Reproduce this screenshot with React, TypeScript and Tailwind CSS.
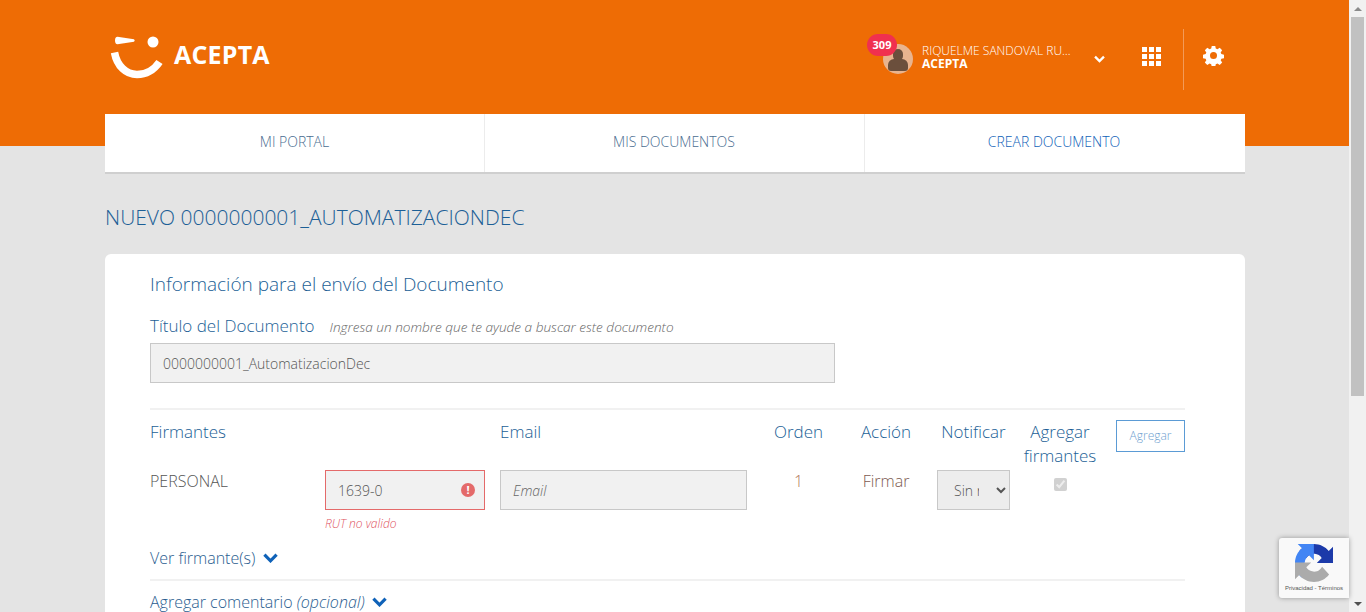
const font = { fontFamily: '"Open Sans", sans-serif' };

function Chevron({ className }: { className: string }) {
  return (
    <svg viewBox="0 0 16 10" className={className} fill="none" stroke="currentColor" strokeWidth="3.4">
      <path d="M1.5 1.5 8 8l6.5-6.5" />
    </svg>
  );
}

function Logo() {
  return (
    <svg viewBox="0 0 56 44" className="w-[56px] h-[44px] mt-[7px]">
      <path d="M8.500.8 25 3.300Q26.500 4.500 25 5.700L8.500 8.200Q6 8.200 6 4.500 6 .8 8.500.8Z" fill="#fff" />
      <circle cx="44" cy="6" r="5.500" fill="#fff" />
      <path d="M5.500 16.500C8 30 17 38.500 28 38.500 37 38.500 45 34 50.500 26" fill="none" stroke="#fff" strokeWidth="7.500" />
    </svg>
  );
}

function Gear() {
  return (
    <svg viewBox="0 0 24 24" className="w-[21px] h-[21px]" fill="#fff">
      <path
        fillRule="evenodd"
        d="M10 1h4l.6 3 1.900.8 2.600-1.700 2.800 2.800-1.700 2.600.8 1.900 3 .6v4l-3 .6-.8 1.900 1.700 2.600-2.800 2.800-2.600-1.700-1.900.8-.6 3h-4l-.6-3-1.900-.8-2.600 1.700-2.800-2.800 1.700-2.600-.8-1.900-3-.6v-4l3-.6.8-1.900-1.700-2.600 2.800-2.800 2.600 1.700 1.900-.8L10 1Zm2 7a4 4 0 1 0 0 8 4 4 0 0 0 0-8Z"
      />
    </svg>
  );
}

function RecaptchaIcon() {
  return (
    <svg viewBox="0 0 64 64" className="w-[38px] h-[38px]">
      <path d="M64 31.955l-.033-1.370V4.687l-7.160 7.160C50.948 4.674 42.033.093 32.050.093c-10.400 0-19.622 4.960-25.458 12.640l11.736 11.860a15.550 15.550 0 0 1 4.754-5.334c2.050-1.600 4.952-2.906 8.968-2.906.485 0 .86.057 1.137.163 4.976.393 9.290 3.140 11.830 7.124l-8.308 8.310c10.520-.04 22.400-.066 27.295.006" fill="#1c3aa9" />
      <path d="M31.862.002l-1.370.033H4.594l7.160 7.160C4.580 13.054 0 21.970 0 31.952c0 10.400 4.960 19.622 12.640 25.458l11.860-11.736a15.550 15.550 0 0 1-5.334-4.754c-1.600-2.050-2.906-4.952-2.906-8.968 0-.485.057-.86.163-1.137.393-4.976 3.140-9.290 7.124-11.830l8.310 8.308c-.04-10.520-.066-22.400.006-27.295" fill="#4285f4" />
      <path d="M.002 32.047l.033 1.370v25.898l7.160-7.160c5.860 7.173 14.774 11.754 24.757 11.754 10.400 0 19.622-4.960 25.458-12.640L45.674 38.410a15.550 15.550 0 0 1-4.754 5.334c-2.050 1.600-4.952 2.906-8.968 2.906-.485 0-.86-.057-1.137-.163-4.976-.393-9.290-3.140-11.830-7.124l8.308-8.310c-10.520.04-22.400.066-27.295-.006" fill="#ababab" />
    </svg>
  );
}

export default function App() {
  return (
    <div className="h-[612px] w-[1366px] overflow-hidden flex relative bg-[#e4e4e4]" style={font}>
      <div className="w-[1349px] shrink-0">
        {/* Cabecera */}
        <header className="h-[146px] bg-[#ee6c05] pl-[105px] pr-[104px] pt-[29px]">
          <div className="flex items-start justify-between h-[61px]">
            <div className="flex items-start gap-[9px] pl-[4px]">
              <Logo />
              <span className="text-[25px] leading-[40px] font-bold text-white tracking-[0.2px] mt-[5px]">ACEPTA</span>
            </div>
            <div className="flex items-center">
              <div className="relative w-[30px] h-[30px] rounded-full bg-[#e9b48f] -mt-[2px] overflow-hidden mr-[9px]">
                <div className="absolute left-[10px] top-[5px] w-[10px] h-[12px] rounded-full bg-[#6b4f3c]" />
                <div className="absolute left-[5px] top-[15px] w-[20px] h-[12px] rounded-t-[6px] rounded-b-[3px] bg-[#6b4f3c]" />
              </div>
              <div className="w-[155px] text-white -mt-[6px]">
                <div className="text-[12px] leading-[13px] font-light truncate">RIQUELME SANDOVAL RUBEN</div>
                <div className="text-[12px] leading-[13px] font-bold">ACEPTA</div>
              </div>
              <Chevron className="w-[11px] h-[8px] text-white ml-[17px] mr-[37px] -mt-[2px]" />
              <div className="grid grid-cols-3 gap-[1.500px] w-[19px] h-[19px] mr-[22px] -mt-[6px]">
                {[0, 1, 2, 3, 4, 5, 6, 7, 8].map((n) => (
                  <span key={n} className="bg-white" />
                ))}
              </div>
              <div className="w-px h-[61px] bg-[#f39a57] mr-[19px]" />
              <div className="mr-[21px] flex -mt-[8px]">
                <Gear />
              </div>
            </div>
          </div>
        </header>

        <main className="pl-[105px] pr-[104px] -mt-[32px] relative">
          {/* Menu */}
          <nav className="h-[60px] bg-white grid grid-cols-3 border-b-2 border-[#cfcfcf] text-[14px] font-light">
            <a className="flex items-center justify-center text-[#4a6d90] border-r border-[#ececec] pb-[4px]">MI PORTAL</a>
            <a className="flex items-center justify-center text-[#4a6d90] border-r border-[#ececec] pb-[4px] pr-[1px]">MIS DOCUMENTOS</a>
            <a className="flex items-center justify-center text-[#0f62b8] pb-[4px] pr-[2px]">CREAR DOCUMENTO</a>
          </nav>

          <h1 className="text-[21px] leading-[28px] font-light text-[#1c5f96] mt-[29px]">
            NUEVO 0000000001_AUTOMATIZACIONDEC
          </h1>

          {/* Formulario */}
          <section className="bg-white rounded-[6px] mt-[23px] pl-[45px] pr-[60px] pt-[18px] h-[400px]">
            <h2 className="text-[19px] leading-[25px] font-light text-[#1c5f96]">Información para el envío del Documento</h2>
            <div className="flex items-baseline mt-[18px] h-[22px]">
              <label className="text-[17px] leading-[22px] font-light text-[#1c5f96]">Título del Documento</label>
              <span className="text-[13.600px] italic font-light text-[#666] ml-[15px]">Ingresa un nombre que te ayude a buscar este documento</span>
            </div>
            <input
              readOnly
              value="0000000001_AutomatizacionDec"
              className="block w-[685px] h-[40px] mt-[6px] bg-[#f1f1f1] border border-[#c8c8c8] px-[12px] text-[14px] text-[#555] font-light outline-none"
            />

            <div className="border-t-2 border-[#f1f1f1] mt-[25px] pt-[11px] flex h-[173px] border-b-2 relative">
              <div className="w-[175px] font-light">
                <div className="text-[17px] leading-[22px] text-[#1c5f96]">Firmantes</div>
                <div className="text-[16px] leading-[22px] text-[#555] mt-[27px]">PERSONAL</div>
                <div className="text-[16px] leading-[22px] text-[#2a5d8f] mt-[55px] flex items-center whitespace-nowrap">
                  Ver firmante(s)
                  <Chevron className="w-[15px] h-[10px] text-[#0f62b8] ml-[8px] -mt-[1px]" />
                </div>
              </div>
              <div className="w-[175px] pt-[49px]">
                <div className="w-[160px] h-[40px] bg-[#f1f1f1] border border-[#e46a6a] flex items-center justify-between pl-[12px] pr-[9px] text-[14px] text-[#555] font-light">
                  1639-0
                  <span className="w-[14px] h-[14px] rounded-full bg-[#e46a6a] text-white text-[11px] font-bold leading-[14px] text-center">!</span>
                </div>
                <div className="text-[12px] italic font-light text-[#e0555f] mt-[5px]">RUT no valido</div>
              </div>
              <div className="w-[272px] font-light">
                <div className="text-[17px] leading-[22px] text-[#1c5f96]">Email</div>
                <input
                  readOnly
                  placeholder="Email"
                  className="block w-[247px] h-[40px] mt-[27px] bg-[#f1f1f1] border border-[#c8c8c8] px-[12px] text-[14px] italic text-[#555] placeholder:text-[#666] outline-none"
                />
              </div>
              <div className="w-[53px] text-center font-light mr-[35px]">
                <div className="text-[17px] leading-[22px] text-[#1c5f96]">Orden</div>
                <div className="text-[16px] leading-[22px] text-[#b0745a] mt-[27px]">1</div>
              </div>
              <div className="w-[52px] text-center font-light mr-[25px]">
                <div className="text-[17px] leading-[22px] text-[#1c5f96]">Acción</div>
                <div className="text-[16px] leading-[22px] text-[#7d5a50] mt-[27px]">Firmar</div>
              </div>
              <div className="w-[73px] font-light mr-[13px]">
                <div className="text-[17px] leading-[22px] text-[#1c5f96] text-center whitespace-nowrap">Notificar</div>
                <select
                  disabled
                  defaultValue="sin"
                  className="block w-[73px] h-[40px] mt-[27px] bg-[#ededed] border border-[#c8c8c8] pl-[12px] pr-[14px] text-[14px] text-[#555] opacity-100"
                >
                  <option value="sin">Sin notificar</option>
                </select>
              </div>
              <div className="w-[74px] text-center font-light mr-[19px] -mt-[1px]">
                <div className="text-[17px] leading-[24px] text-[#1c5f96]">Agregar firmantes</div>
                <input type="checkbox" checked disabled readOnly className="block mx-auto mt-[10px] w-[13px] h-[13px]" />
              </div>
              <button className="w-[69px] h-[32px] -mt-[1px] border border-[#5b9bd5] text-[12px] font-light text-[#6f9fd0]">Agregar</button>
            </div>
            <div className="text-[16px] leading-[22px] font-light text-[#2a5d8f] mt-[10px] flex items-center">
              Agregar comentario&nbsp;<i>(opcional)</i>
              <Chevron className="w-[15px] h-[10px] text-[#0f62b8] ml-[7px] -mt-[1px]" />
            </div>
          </section>
        </main>
      </div>

      {/* Barra de scroll */}
      <div className="w-[17px] shrink-0 bg-[#f1f1f1] flex flex-col items-center">
        <div className="h-[17px] flex items-center justify-center">
          <div className="w-0 h-0 border-x-[4px] border-x-transparent border-b-[4px] border-b-[#8a8a8a]" />
        </div>
        <div className="w-[13px] h-[379px] bg-[#c1c1c1]" />
        <div className="mt-auto h-[17px] flex items-center justify-center">
          <div className="w-0 h-0 border-x-[4px] border-x-transparent border-t-[4px] border-t-[#505050]" />
        </div>
      </div>

      {/* Badge de notificaciones */}
      <div className="absolute left-[867px] top-[34px] w-[30px] h-[22px] rounded-full bg-[#f0304f] text-white text-[11px] font-bold leading-[22px] text-center">309</div>

      {/* reCAPTCHA */}
      <div className="absolute left-[1279px] top-[538px] w-[70px] h-[60px] bg-[#f9f9f9] rounded-l-[3px] shadow-[0_0_5px_rgba(0,0,0,0.35)] flex flex-col items-center pt-[6px]">
        <RecaptchaIcon />
        <span className="text-[6px] leading-[8px] text-[#555] mt-[2px] whitespace-nowrap" style={{ fontFamily: '"Liberation Sans", sans-serif' }}>
          Privacidad - Términos
        </span>
      </div>
    </div>
  );
}
